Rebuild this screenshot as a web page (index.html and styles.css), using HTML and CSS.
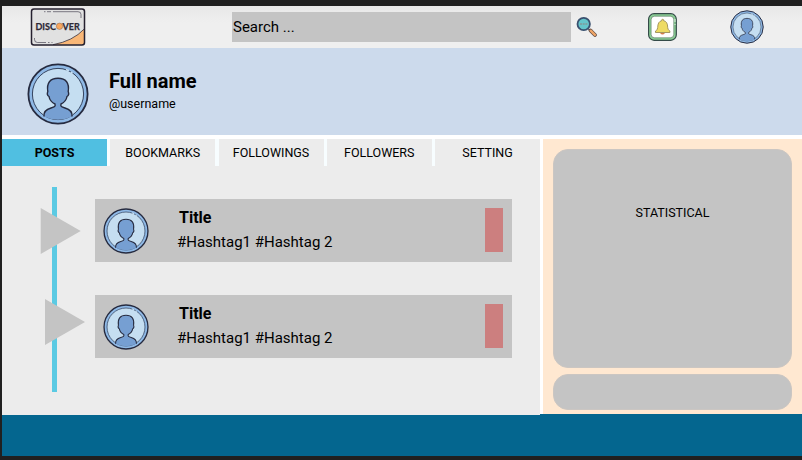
FILE: index.html
```
<!DOCTYPE html>
<html lang="en">
<head>
<meta charset="utf-8">
<title>Profile</title>
<link rel="stylesheet" href="styles.css">
</head>
<body>
<svg class="defs" width="0" height="0" aria-hidden="true">
  <symbol id="avatar" viewBox="0 0 62 62">
    <circle cx="31" cy="31" r="29.6" fill="#8fb9e6" stroke="#262b40" stroke-width="1.8"/>
    <circle cx="31" cy="31" r="25.6" fill="#c5def1" stroke="#34435e" stroke-width="1"/>
    <path d="M39 6.500l3 1.200M44 9l1.500 1" stroke="#c5def1" stroke-width="1.600"/>
    <path d="M17 53.500C16.500 49 18.500 46.500 24 45C27.500 44 28.800 43.500 28 41C25 39.500 22.500 36.500 22 33.500C20.300 32.500 20.200 30 20.800 28.500C19.500 20 23 15.300 31 15.300S42.500 20 41.200 28.500C41.800 30 41.700 32.500 40 33.500C39.500 36.500 37 39.500 34 41C33.200 43.500 34.500 44 38 45C43.500 46.500 45.500 49 45 53.500Q38 56.800 31 56.800T17 53.500Z" fill="#769fd2"/>
    <path d="M17 53.500C16.500 49 18.500 46.500 24 45C27.500 44 28.800 43.500 28 41C25 39.500 22.500 36.500 22 33.500C20.300 32.500 20.200 30 20.800 28.500C19.500 20 23 15.300 31 15.300S42.500 20 41.200 28.500C41.800 30 41.700 32.500 40 33.500C39.500 36.500 37 39.500 34 41C33.200 43.500 34.500 44 38 45C43.500 46.500 45.500 49 45 53.500" fill="none" stroke="#262b40" stroke-width="1.400"/>
  </symbol>
</svg>
<div class="app">
  <header class="topbar">
    <svg class="logo" viewBox="0 0 56 40">
      <rect x="1.500" y="2" width="53" height="36" rx="2.500" fill="#e1e1e1"/>
      <path d="M23 37.700Q43 34 54.200 22V35.700Q54.200 37.700 52 37.700Z" fill="#f9b777"/>
      <path d="M23 37.700Q43 34 54.200 22" fill="none" stroke="#343142" stroke-width=".8"/>
      <rect x="1.500" y="2" width="53" height="36" rx="2.500" fill="none" stroke="#25202f" stroke-width="1.500"/>
      <path d="M14 4.700h1.500M17 4.700h4M23 4.700h25Q51 4.700 51 7.500V11M4.500 31v1.500Q4.500 35.500 7.500 35.500H16M18 35.500h1.500M21.500 35.500h1" fill="none" stroke="#343142" stroke-width=".6"/>
      <text class="logo-text" x="5.500" y="22.800" textLength="20.500" lengthAdjust="spacingAndGlyphs">DISC</text>
      <circle cx="29.500" cy="19.300" r="3.200" fill="#f9a75e" stroke="#6b5148" stroke-width=".4"/>
      <text class="logo-text" x="32.500" y="22.800" textLength="17.200" lengthAdjust="spacingAndGlyphs">VER</text>
    </svg>
    <div class="search">Search ...</div>
    <svg class="glass" viewBox="0 0 22 22">
      <path d="M12.500 13l2.500 2.500" stroke="#4b5266" stroke-width="1.500"/>
      <path d="M14.500 14.500l4.500 4.500" stroke="#5c4944" stroke-width="3.800" stroke-linecap="round"/>
      <path d="M14.700 14.700l4.200 4.200" stroke="#efa566" stroke-width="2.400" stroke-linecap="round"/>
      <circle cx="7.700" cy="8" r="6.200" fill="#66c5cb" stroke="#39506f" stroke-width="1.800"/>
      <path d="M4 8h7.500" stroke="#7ca2a5" stroke-width="2" stroke-dasharray="2 .7"/>
    </svg>
    <svg class="bell" viewBox="0 0 30 30">
      <rect x=".6" y="1.700" width="27.700" height="26.600" rx="5.500" fill="#8bcf96" stroke="#344a48" stroke-width="1.200"/>
      <rect x="3.100" y="4.200" width="22.700" height="21.600" rx="3.500" fill="#fff" stroke="#4c6d55" stroke-width=".6"/>
      <path d="M27 7v3M27 12v1" stroke="#dff0e1"/>
      <path d="M12 21h5q-2.500 3-5 0Z" fill="#d37d4a"/>
      <path d="M7.500 20.500v-1.500q2.200-1 2.200-3.500c0-4 1.400-6.300 4-6.800v-.9q1-1 2 0v.9c2.600.5 4 2.800 4 6.800q0 2.500 2.200 3.500V20.500Z" fill="#eedb63" stroke="#90814c" stroke-width=".8"/>
    </svg>
    <svg class="me"><use href="#avatar"/></svg>
  </header>
  <section class="profile">
    <svg class="portrait"><use href="#avatar"/></svg>
    <div>
      <h1>Full name</h1>
      <p>@username</p>
    </div>
  </section>
  <div class="content">
    <main>
      <nav>
        <a class="active">POSTS</a><a>BOOKMARKS</a><a>FOLLOWINGS</a><a>FOLLOWERS</a><a>SETTING</a>
      </nav>
      <div class="feed">
        <svg class="rail" viewBox="0 0 93 249">
          <path d="M50 21h5v205h-5z" fill="#5bcae3"/>
          <path d="M38.700 42v46l40-23zM43 133v46l40-23z" fill="#c4c4c4"/>
        </svg>
        <div class="posts">
          <article>
            <svg><use href="#avatar"/></svg>
            <div class="text"><h2>Title</h2><p>#Hashtag1 #Hashtag 2</p></div>
            <span class="mark"></span>
          </article>
          <article>
            <svg><use href="#avatar"/></svg>
            <div class="text"><h2>Title</h2><p>#Hashtag1 #Hashtag 2</p></div>
            <span class="mark"></span>
          </article>
        </div>
      </div>
    </main>
    <aside>
      <div class="stats">STATISTICAL</div>
      <div class="extra"></div>
    </aside>
  </div>
</div>
</body>
</html>
```
FILE: styles.css
```
* { box-sizing: border-box; }
body {
  margin: 0;
  height: 460px;
  padding: 6px 0 4px 2px;
  overflow: hidden;
  background: #202020;
  color: #000;
  font-family: Roboto, sans-serif;
}
h1, h2, p { margin: 0; }
svg { display: block; flex: none; }
.defs { position: absolute; }
.app { height: 450px; background: #04668f; }
.topbar {
  display: flex;
  height: 42px;
  background: linear-gradient(#e8e8e8, #efefef 40%);
}
.logo { width: 56px; height: 40px; margin: 1px 0 0 28px; }
.logo-text {
  font: bold 9.8px Lato, sans-serif;
  fill: #2c2835;
  stroke: #2c2835;
  stroke-width: .25px;
}
.search {
  width: 339px;
  height: 30px;
  margin: 6px 0 0 146px;
  padding-left: 1px;
  background: #c4c4c4;
  font-size: 15px;
  line-height: 30px;
}
.glass { width: 22px; height: 22px; margin: 10px 0 0 5px; }
.bell { width: 30px; height: 30px; margin: 6px 0 0 50px; }
.me { width: 34px; height: 34px; margin: 4px 0 0 51.5px; }
.profile {
  display: flex;
  height: 87px;
  background: #ccdaec;
}
.portrait { width: 62px; height: 62px; margin: 14.5px 20px 0 25px; }
h1 { margin-top: 21px; font-size: 20px; line-height: 24px; }
.profile p { margin-top: 3px; font-size: 12.5px; line-height: 16px; }
.content {
  display: grid;
  grid-template-columns: 538px 259px;
  column-gap: 3px;
  height: 279px;
  padding-top: 4px;
  background: #fff;
}
main { height: 276px; background: #ececec; }
nav {
  display: grid;
  grid-template-columns: repeat(5, 105px);
  justify-content: space-between;
  height: 27px;
  background: #f7fdff;
}
nav a {
  background: #ececec;
  font-size: 12.5px;
  line-height: 27px;
  text-align: center;
}
nav .active { background: #50bfe1; font-weight: bold; }
.feed { display: flex; height: 249px; }
.rail { width: 93px; height: 249px; }
.posts {
  display: flex;
  flex-direction: column;
  gap: 33px;
  width: 417px;
  padding-top: 33px;
}
article {
  display: flex;
  height: 63px;
  padding: 9px 9px 0 8px;
  background: #c4c4c4;
}
article svg { width: 46px; height: 46px; }
.text { margin-left: 28px; }
h2 { padding-left: 2px; font-size: 16px; line-height: 20px; }
.text p { margin-top: 4px; font-size: 15px; line-height: 20px; }
.mark { width: 18px; height: 44px; margin-left: auto; background: #cc7f7f; }
aside {
  display: flex;
  flex-direction: column;
  gap: 6px;
  height: 275px;
  padding: 10px 10px 4px;
  background: #ffe8d1;
}
.stats {
  height: 219px;
  padding-top: 55px;
  border: 1px solid #cbc6c2;
  border-radius: 15px;
  background: #c4c4c4;
  font-size: 12.5px;
  line-height: 16px;
  text-align: center;
}
.extra {
  height: 36px;
  border: 1px solid #cbc6c2;
  border-radius: 15px;
  background: #c4c4c4;
}
```
